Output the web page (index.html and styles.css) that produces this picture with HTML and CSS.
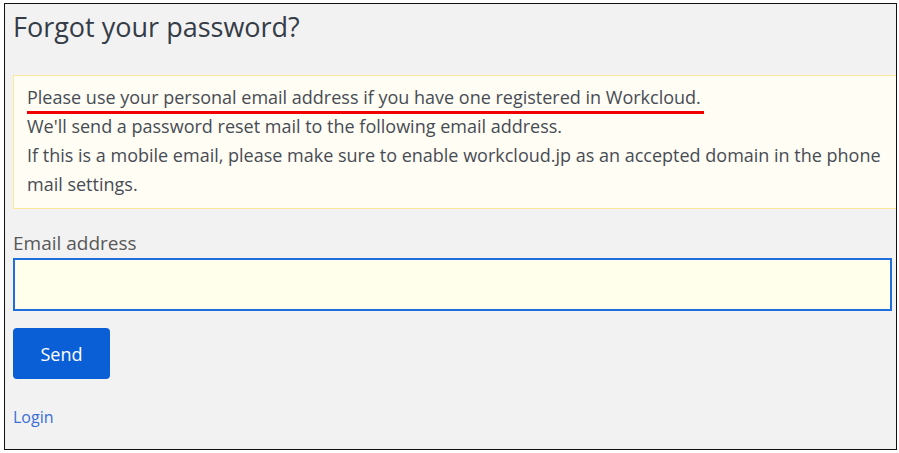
FILE: index.html
```html
<!DOCTYPE html>
<html lang="en">
<head>
<meta charset="utf-8">
<title>Forgot your password?</title>
<link rel="stylesheet" href="styles.css">
</head>
<body>
<div class="frame">
  <h1 class="title">Forgot your password?</h1>
  <div class="notice">
    <p class="line"><span class="marked">Please use your personal email address if you have one registered in Workcloud.</span></p>
    <p class="line">We'll send a password reset mail to the following email address.</p>
    <p class="line">If this is a mobile email, please make sure to enable workcloud.jp as an accepted domain in the phone mail settings.</p>
  </div>
  <label class="label" for="email">Email address</label>
  <input class="input" id="email" type="email">
  <button class="send" type="button">Send</button>
  <a class="login" href="#">Login</a>
</div>
</body>
</html>
```
FILE: styles.css
```css
html, body {
  margin: 0;
  padding: 0;
  background: #ffffff;
}
body {
  padding: 3px 0 0 4px;
  font-family: "Open Sans", Lato, sans-serif;
}
.frame {
  box-sizing: border-box;
  width: 893px;
  height: 447px;
  border: 1px solid #111;
  background: #f2f2f2;
  overflow: hidden;
  padding: 0 4px 0 8px;
  display: flex;
  flex-direction: column;
  align-items: flex-start;
}
.title {
  margin: 8px 0 0 0;
  font-size: 27px;
  line-height: 30px;
  font-weight: 400;
  color: #343c47;
}
.notice {
  box-sizing: border-box;
  margin-top: 33px;
  width: 901px;
  flex-shrink: 0;
  border: 1px solid #fbe99a;
  background: #fffdf4;
  padding: 7px 13px 9px;
  color: #474c54;
  font-size: 18px;
  line-height: 29px;
}
.line {
  margin: 0;
}
.marked {
  padding: 0 3px 5px 0;
  background: linear-gradient(#f00000, #f00000) no-repeat left bottom / 100% 3px;
}
.label {
  margin-top: 21px;
  font-size: 19px;
  line-height: 26px;
  color: #585858;
}
.input {
  box-sizing: border-box;
  margin-top: 2px;
  width: 879px;
  height: 53px;
  border: 2px solid #1e6fdd;
  background: #ffffeb;
  outline: none;
  padding: 0 10px;
}
.send {
  margin-top: 17px;
  width: 97px;
  height: 51px;
  border: 0;
  border-radius: 4px;
  background: #0a5fd6;
  color: #ffffff;
  font-family: "Open Sans", Lato, sans-serif;
  font-size: 18px;
}
.login {
  margin-top: 27px;
  font-size: 16px;
  line-height: 22px;
  color: #3a6fd8;
  text-decoration: none;
}
```
